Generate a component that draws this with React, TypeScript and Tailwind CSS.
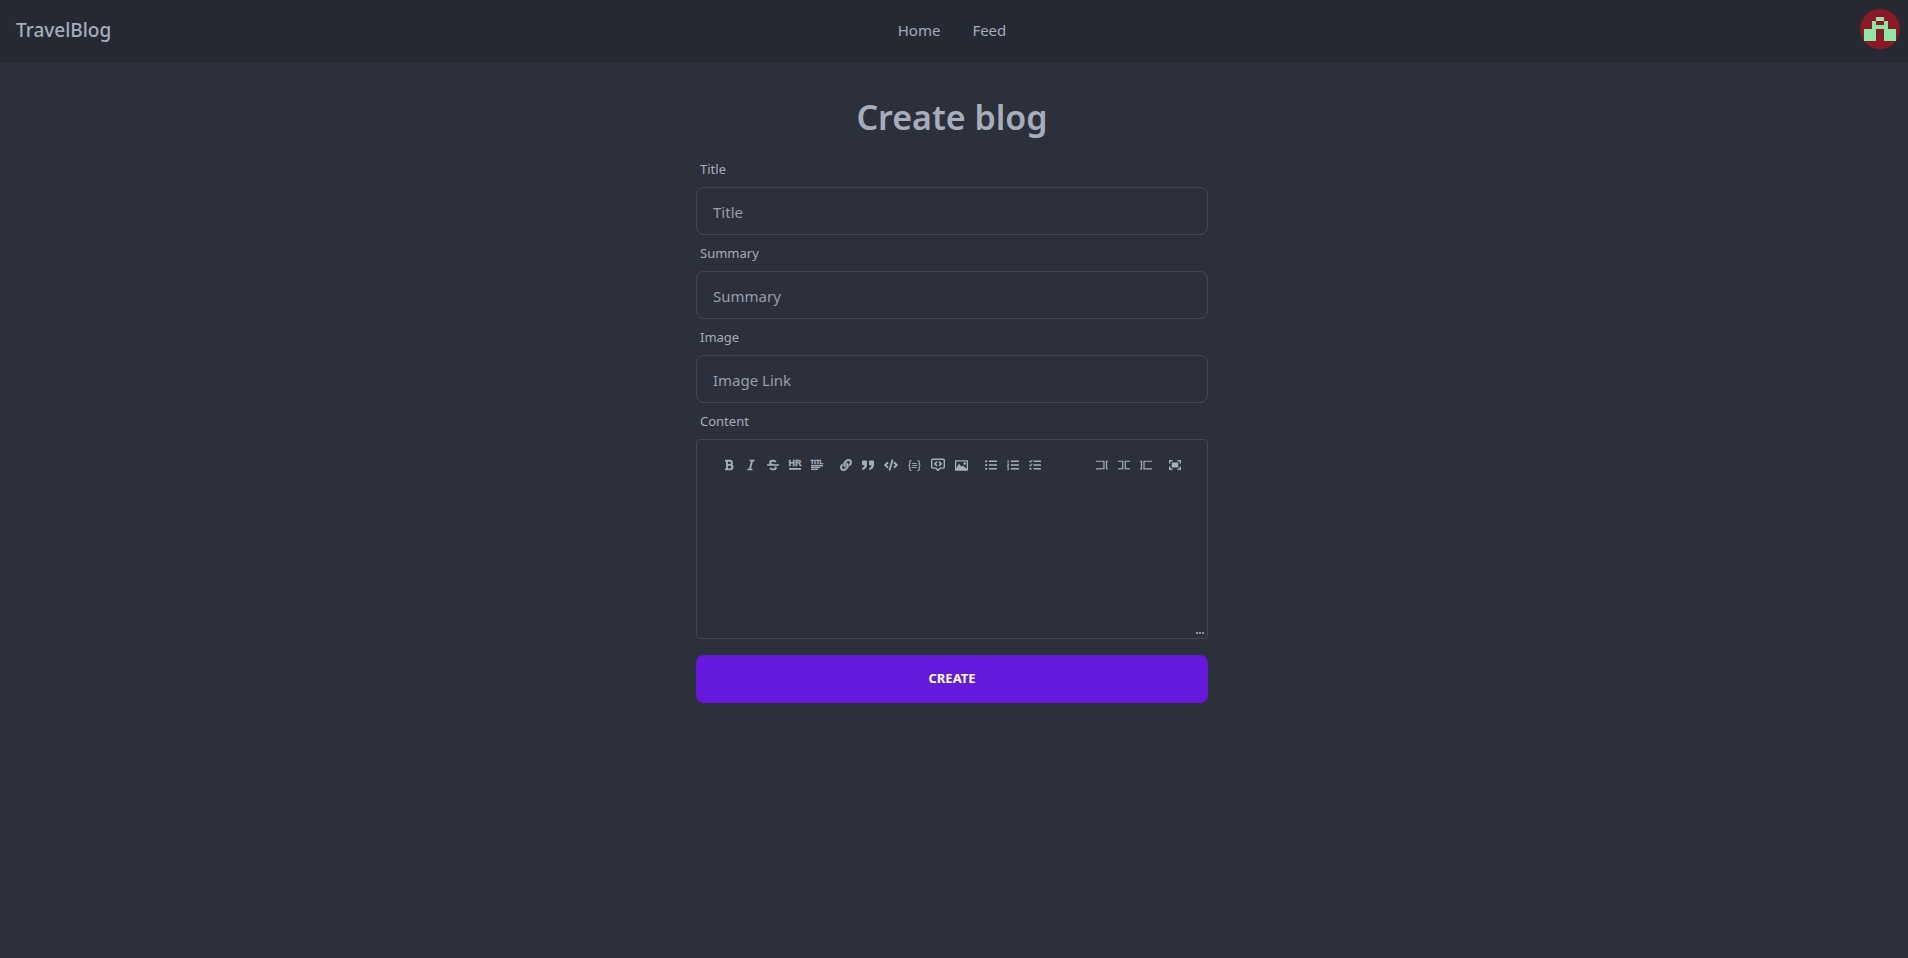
import type { ReactNode } from 'react'
import { FaBold, FaItalic, FaStrikethrough, FaCode, FaListUl, FaListOl, FaTasks } from 'react-icons/fa'

type Tool = { name: string; icon: ReactNode }

const HrIcon = () => (
  <svg className="h-3 w-3 overflow-visible" viewBox="0 0 12 12" fill="currentColor">
    <text x="-0.5" y="7.2" fontSize="9" fontWeight="700" fontFamily="Liberation Sans, sans-serif" stroke="currentColor" strokeWidth="0.3">HR</text>
    <rect x="0" y="9" width="12" height="1.8" />
  </svg>
)

const TitleIcon = () => (
  <svg className="h-3 w-3 overflow-visible" viewBox="0 0 12 12" fill="currentColor">
    <text x="-0.4" y="5" fontSize="6" fontWeight="700" fontFamily="Liberation Sans, sans-serif" stroke="currentColor" strokeWidth="0.4">TITL</text>
    <rect x="0" y="6" width="12" height="1.5" />
    <rect x="0" y="8" width="9" height="1.2" />
    <rect x="0" y="9.8" width="7" height="1.2" />
  </svg>
)

const LinkIcon = () => (
  <svg className="h-3 w-3" viewBox="0 0 512 512" fill="currentColor" stroke="currentColor" strokeWidth="14">
    <path d="M326.612 185.391c59.747 59.809 58.927 155.698.36 214.59-.11.12-.24.25-.36.37l-67.2 67.2c-59.27 59.27-155.699 59.262-214.96 0-59.27-59.26-59.27-155.7 0-214.96l37.106-37.106c9.84-9.84 26.786-3.3 27.294 10.606.648 17.722 3.826 35.527 9.69 52.721 1.986 5.822.567 12.262-3.783 16.612l-13.087 13.087c-28.026 28.026-28.905 73.66-1.155 101.96 28.024 28.579 74.086 28.749 102.325.51l67.2-67.19c28.191-28.191 28.073-73.757 0-101.83-3.701-3.694-7.429-6.564-10.341-8.569a16.037 16.037 0 0 1-6.947-12.606c-.396-10.567 3.348-21.456 11.698-29.806l21.054-21.055c5.521-5.521 14.182-6.199 20.584-1.731a152.482 152.482 0 0 1 20.522 17.197zM467.547 44.449c-59.261-59.262-155.69-59.27-214.96 0l-67.2 67.2c-.12.12-.25.25-.36.37-58.566 58.892-59.387 154.781.36 214.59a152.454 152.454 0 0 0 20.521 17.196c6.402 4.468 15.064 3.789 20.584-1.731l21.054-21.055c8.35-8.35 12.094-19.239 11.698-29.806a16.037 16.037 0 0 0-6.947-12.606c-2.912-2.005-6.64-4.875-10.341-8.569-28.073-28.073-28.191-73.639 0-101.83l67.2-67.19c28.239-28.239 74.3-28.069 102.325.51 27.75 28.3 26.872 73.934-1.155 101.96l-13.087 13.087c-4.35 4.35-5.769 10.79-3.783 16.612 5.864 17.194 9.042 34.999 9.69 52.721.509 13.906 17.454 20.446 27.294 10.606l37.106-37.106c59.271-59.259 59.271-155.699.001-214.959z" />
  </svg>
)

const QuoteIcon = () => (
  <svg className="h-3 w-3" viewBox="0 0 520 520" fill="currentColor">
    <path d="M520 95.75v130c0 139.2-62.9 211.3-195 246.7-10 2.7-20-4.900-20-15.400v-46.400c0-6.900 4.400-13 10.900-15.200 56.500-19.400 91.500-54.800 91.500-120.700H335c-17.900 0-32.500-14.600-32.500-32.500V95.750c0-17.900 14.600-32.500 32.500-32.500h152.500c17.900 0 32.500 14.600 32.500 32.500zM217.500 95.750v130c0 139.200-62.900 211.300-195 246.700-10 2.700-20-4.900-20-15.400v-46.400c0-6.900 4.400-13 10.900-15.200 56.500-19.400 91.500-54.800 91.500-120.700H32.500C14.600 274.750 0 260.150 0 242.250V95.750c0-17.900 14.600-32.500 32.500-32.500H185c17.900 0 32.500 14.600 32.500 32.500z" />
  </svg>
)

const CodeBlockIcon = () => (
  <svg className="h-[13px] w-[13px]" viewBox="0 0 13 13" fill="none" stroke="currentColor" strokeWidth="1.2">
    <path d="M3.5 1.500H3Q1.800 1.500 1.800 2.800V5Q1.800 6.500.4 6.500 1.800 6.500 1.800 8v2.200q0 1.300 1.200 1.300h.5M9.500 1.500h.5q1.200 0 1.200 1.300V5q0 1.500 1.400 1.500-1.400 0-1.400 1.500v2.200q0 1.300-1.200 1.300h-.5" />
    <path d="M3.700 4.500h5M4.300 6.500h5M3.700 8.500h5" strokeWidth="0.9" />
  </svg>
)

const CommentIcon = () => (
  <svg className="h-[14px] w-[14px]" viewBox="0 0 14 14" fill="none" stroke="currentColor" strokeWidth="1.4">
    <path d="M1.700 1.200h10.600q1 0 1 1v6.900q0 1-1 1H9.300L7 12.500 4.700 10.100h-3q-1 0-1-1V2.200q0-1 1-1z" strokeLinejoin="round" />
    <path d="M6 3.700 3.900 5.800l2.100 2.100M8 3.700l2.100 2.100L8 7.900" strokeWidth="1.700" />
  </svg>
)

const PictureIcon = () => (
  <svg className="h-[13px] w-[13px]" viewBox="0 0 20 20" fill="currentColor">
    <path d="M15 9c1.100 0 2-.9 2-2s-.9-2-2-2-2 .9-2 2 .9 2 2 2zm4-7H1c-.55 0-1 .45-1 1v14c0 .55.45 1 1 1h18c.55 0 1-.45 1-1V3c0-.55-.45-1-1-1zm-1 13l-6-5-2 2-4-5-4 8V4h16v11z" />
  </svg>
)

const PaneIcon = ({ left, right }: { left: string; right: string }) => (
  <svg className="h-3 w-3" viewBox="0 0 520 520" fill="currentColor">
    <polygon points={left} />
    <polygon points={right} />
  </svg>
)

const FullscreenIcon = () => (
  <svg className="h-3 w-3" viewBox="0 0 12 12" fill="currentColor">
    <rect x="2.7" y="3.5" width="6.6" height="5" rx=".5" />
    <path d="M0 1.100h3.500v1.400H1.400v2H0zM12 1.100H8.500v1.400h2.100v2H12zM0 11h3.500V9.600H1.400v-2H0zM12 11H8.500V9.600h2.100v-2H12z" />
  </svg>
)

const editGroups: Tool[][] = [
  [
    { name: 'Add bold text', icon: <FaBold className="h-3 w-3" /> },
    { name: 'Add italic text', icon: <FaItalic className="h-3 w-3" /> },
    { name: 'Add strikethrough text', icon: <FaStrikethrough className="h-3 w-3" /> },
    { name: 'Insert horizontal rule', icon: <HrIcon /> },
    { name: 'Insert title', icon: <TitleIcon /> },
  ],
  [
    { name: 'Add a link', icon: <LinkIcon /> },
    { name: 'Insert a quote', icon: <QuoteIcon /> },
    { name: 'Insert code', icon: <FaCode className="h-[14px] w-[14px]" /> },
    { name: 'Insert code block', icon: <CodeBlockIcon /> },
    { name: 'Insert comment', icon: <CommentIcon /> },
    { name: 'Add image', icon: <PictureIcon /> },
  ],
  [
    { name: 'Add unordered list', icon: <FaListUl className="h-3 w-3" /> },
    { name: 'Add ordered list', icon: <FaListOl className="h-3 w-3" /> },
    { name: 'Add checked list', icon: <FaTasks className="h-3 w-3" /> },
  ],
]

const viewGroups: Tool[][] = [
  [
    {
      name: 'Edit code',
      icon: (
        <PaneIcon
          left="0 71.293 0 122 319 122 319 397 0 397 0 449.707 372 449.413 372 71.293"
          right="429 71.293 520 71.293 520 122 481 123 481 396 520 396 520 449.707 429 449.413"
        />
      ),
    },
    {
      name: 'Live code',
      icon: (
        <PaneIcon
          left="0 71.293 0 122 179 122 179 397 0 397 0 449.707 232 449.413 232 71.293"
          right="289 71.293 520 71.293 520 122 341 123 341 396 520 396 520 449.707 289 449.413"
        />
      ),
    },
    {
      name: 'Preview code',
      icon: (
        <PaneIcon
          left="0 71.293 0 122 38.023 123 38.023 398 0 397 0 449.707 91.023 450.413 91.023 72.293"
          right="148.023 72.293 520 71.293 520 122 200.023 124 200.023 397 520 396 520 449.707 148.023 450.413"
        />
      ),
    },
  ],
  [{ name: 'Toggle fullscreen', icon: <FullscreenIcon /> }],
]

const ToolGroups = ({ groups }: { groups: Tool[][] }) => (
  <div className="flex gap-[9px]">
    {groups.map((group) => (
      <div key={group[0].name} className="flex gap-0.5">
        {group.map((tool) => (
          <button key={tool.name} type="button" aria-label={tool.name} className="flex h-5 items-center px-1">
            {tool.icon}
          </button>
        ))}
      </div>
    ))}
  </div>
)

const Field = ({ id, label, placeholder }: { id: string; label: string; placeholder: string }) => (
  <>
    <label htmlFor={id} className="px-1 py-2 text-[13px] leading-5">
      {label}
    </label>
    <input
      id={id}
      type="text"
      placeholder={placeholder}
      className="h-12 rounded-lg border border-[#444852] bg-transparent px-4 pt-0.5 text-[15px] outline-none placeholder:text-[#989eaa]"
    />
  </>
)

const Avatar = () => (
  <svg className="h-10 w-10 rounded-full" viewBox="0 0 10 10" shapeRendering="crispEdges" aria-hidden="true">
    <rect width="10" height="10" fill="#8c1827" />
    <path fill="#8ce8a3" d="M4 2h2v1h1v2h2v3H6V5H4v3H1V5h2V3h1z" />
    <path fill="#8c1827" d="M4 3h2v1H4z" />
  </svg>
)

export default function App() {
  return (
    <div className="min-h-screen bg-[#2c303a] font-['Noto_Sans','Open_Sans',sans-serif] text-[#a6adbb]">
      <header className="grid h-[63px] grid-cols-[1fr_auto_1fr] items-center bg-[#252932] px-2 pb-0.5">
        <a href="#" className="justify-self-start px-2 text-[19px] font-medium">
          TravelBlog
        </a>
        <nav className="flex pr-1 text-[15px]">
          <a href="#home" className="px-4">Home</a>
          <a href="#feed" className="px-4">Feed</a>
        </nav>
        <button type="button" aria-label="Account" className="mb-1 justify-self-end rounded-full">
          <Avatar />
        </button>
      </header>

      <div className="pt-[34px] pr-1">
        <main className="mx-auto w-full max-w-lg">
          <h1 className="text-center text-[34px] leading-10 font-semibold">Create blog</h1>
          <form className="flex flex-col pt-[14px]">
            <Field id="title" label="Title" placeholder="Title" />
            <Field id="summary" label="Summary" placeholder="Summary" />
            <Field id="image" label="Image" placeholder="Image Link" />
            <label htmlFor="content" className="px-1 py-2 text-[13px] leading-5">
              Content
            </label>
            <div className="relative flex h-[200px] flex-col rounded border border-[#444852]">
              <div className="flex justify-between px-[22px] pt-[15px]">
                <ToolGroups groups={editGroups} />
                <ToolGroups groups={viewGroups} />
              </div>
              <textarea
                id="content"
                className="w-full flex-1 resize-none bg-transparent px-7 py-3 text-sm outline-none"
              />
              <svg className="absolute right-[3px] bottom-1 h-0.5 w-2 opacity-80" viewBox="0 0 8 2" fill="currentColor" aria-hidden="true">
                <path d="M0 0h2v2H0zM3 0h2v2H3zM6 0h2v2H6z" />
              </svg>
            </div>
            <button type="submit" className="mt-4 h-12 rounded-lg bg-[#6419dd] text-[13px] font-bold text-white uppercase">
              Create
            </button>
          </form>
        </main>
      </div>
    </div>
  )
}
